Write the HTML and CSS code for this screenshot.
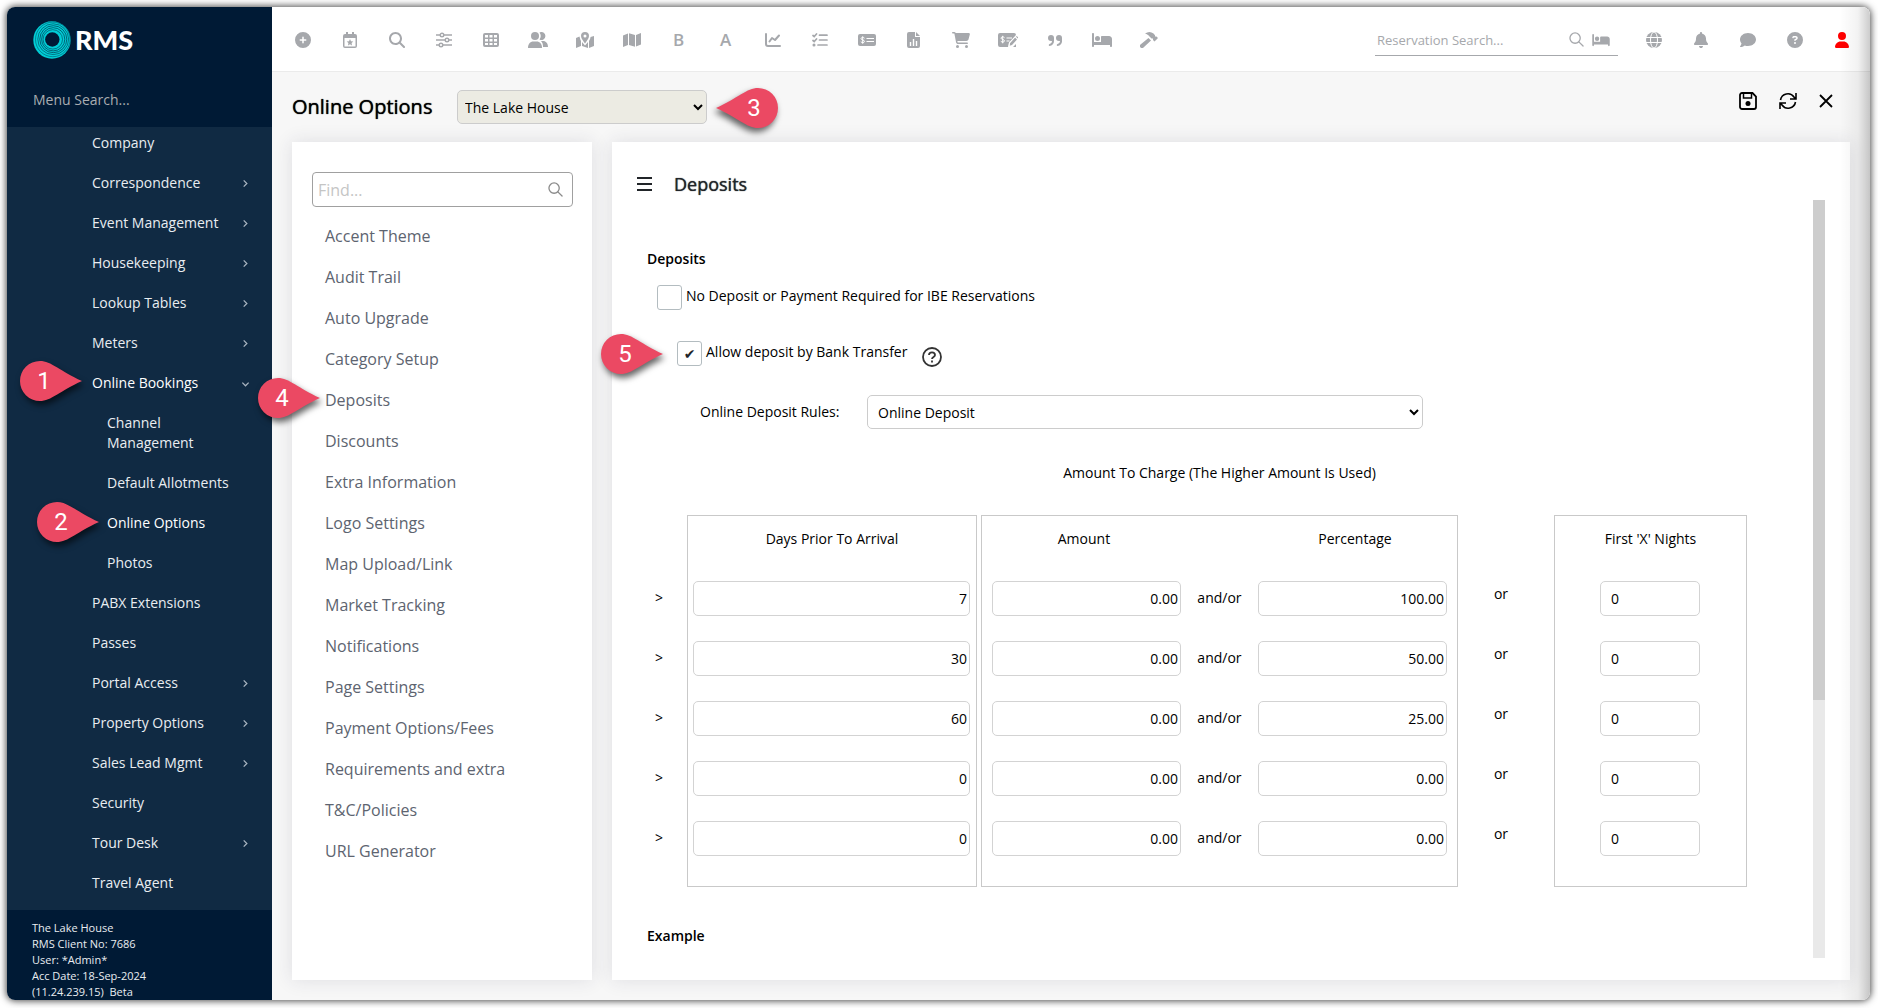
FILE: index.html
```html
<!DOCTYPE html>
<html lang="en">
<head>
<meta charset="utf-8">
<title>RMS - Online Options</title>
<link rel="stylesheet" href="styles.css">
</head>
<body>
<svg class="sprite" aria-hidden="true">
  <symbol id="bed" viewBox="0 0 640 512"><path d="M32 32c17.700 0 32 14.300 32 32V320H288V160c0-17.700 14.300-32 32-32H544c53 0 96 43 96 96V448c0 17.700-14.300 32-32 32s-32-14.300-32-32V416H64v32c0 17.700-14.300 32-32 32s-32-14.300-32-32V64C0 46.300 14.300 32 32 32zm144 96a80 80 0 1 1 0 160 80 80 0 1 1 0-160z"/></symbol>
  <symbol id="right" viewBox="0 0 10 10"><path d="M3 1.500l3.500 3.500L3 8.500" fill="none" stroke="currentColor" stroke-width="1.400"/></symbol>
  <symbol id="down" viewBox="0 0 10 10"><path d="M1.500 4l3.500 3.500L8.500 4" fill="none" stroke="currentColor" stroke-width="1.400"/></symbol>
  <symbol id="find" viewBox="0 0 16 16"><g fill="none" stroke="currentColor" stroke-width="1.400" stroke-linecap="round"><circle cx="6.500" cy="6.500" r="5.500"/><path d="M10.500 10.500l4.500 4.500"/></g></symbol>
  <symbol id="drop" viewBox="0 0 62 40"><path d="M20 0C31 0 40 10 62 20C40 30 31 40 20 40A20 20 0 0 1 20 0z"/></symbol>
</svg>
<div class="window">
  <aside class="sidebar">
    <div class="brand">
      <a class="logo" href="#">
        <svg width="38" height="38" viewBox="0 0 38 38" fill="none" stroke="#001a35" aria-hidden="true">
          <circle cx="19" cy="19" r="18.700" fill="#00ced6" stroke="none"/>
          <circle cx="19.800" cy="18.400" r="17.300" stroke-width=".4"/>
          <circle cx="20.200" cy="18.200" r="15.400" stroke-width=".5"/>
          <circle cx="20.300" cy="18.200" r="13.500" stroke-width=".6"/>
          <circle cx="20.200" cy="18.300" r="11.600" stroke-width=".6"/>
          <circle cx="19.800" cy="18.400" r="9.700" stroke-width=".5"/>
          <circle cx="19.300" cy="18.500" r="7.200" fill="#001a35" stroke="none"/>
        </svg>
        <span>RMS</span>
      </a>
      <input class="menu-search" type="text" placeholder="Menu Search..." aria-label="Menu search">
    </div>
    <nav class="menu" aria-label="Main menu">
      <ul>
        <li><a href="#">Company</a></li>
        <li><a href="#">Correspondence<svg class="chev"><use href="#right"/></svg></a></li>
        <li><a href="#">Event Management<svg class="chev"><use href="#right"/></svg></a></li>
        <li><a href="#">Housekeeping<svg class="chev"><use href="#right"/></svg></a></li>
        <li><a href="#">Lookup Tables<svg class="chev"><use href="#right"/></svg></a></li>
        <li><a href="#">Meters<svg class="chev"><use href="#right"/></svg></a></li>
        <li class="current"><a href="#">Online Bookings<svg class="chev"><use href="#down"/></svg></a>
          <ul class="submenu">
            <li><a href="#">Channel<br>Management</a></li>
            <li><a href="#">Default Allotments</a></li>
            <li class="current"><a href="#">Online Options</a></li>
            <li><a href="#">Photos</a></li>
          </ul>
        </li>
        <li><a href="#">PABX Extensions</a></li>
        <li><a href="#">Passes</a></li>
        <li><a href="#">Portal Access<svg class="chev"><use href="#right"/></svg></a></li>
        <li><a href="#">Property Options<svg class="chev"><use href="#right"/></svg></a></li>
        <li><a href="#">Sales Lead Mgmt<svg class="chev"><use href="#right"/></svg></a></li>
        <li><a href="#">Security</a></li>
        <li><a href="#">Tour Desk<svg class="chev"><use href="#right"/></svg></a></li>
        <li><a href="#">Travel Agent</a></li>
      </ul>
    </nav>
    <footer class="client">
      <div>The Lake House</div>
      <div>RMS Client No: 7686</div>
      <div>User: *Admin*</div>
      <div>Acc Date: 18-Sep-2024</div>
      <div>(11.24.239.15)&nbsp; Beta</div>
    </footer>
  </aside>

  <main class="main">
    <header class="topbar">
      <div class="tools">
        <button aria-label="Add"><svg width="16" height="16" viewBox="0 0 512 512"><path fill-rule="evenodd" d="M256 512A256 256 0 1 0 256 0a256 256 0 1 0 0 512zM232 344V280H168c-13 0-24-11-24-24s11-24 24-24h64V168c0-13 11-24 24-24s24 11 24 24v64h64c13 0 24 11 24 24s-11 24-24 24H280v64c0 13-11 24-24 24s-24-11-24-24z"/></svg></button>
        <button aria-label="Events"><svg width="14" height="16" viewBox="0 0 14 16"><path fill-rule="evenodd" d="M3 0h2v2h4V0h2v2h1a2 2 0 0 1 2 2v10a2 2 0 0 1-2 2H2a2 2 0 0 1-2-2V4a2 2 0 0 1 2-2h1zM1.500 6v8.500h11V6z"/><path d="M7 7l1 2.200 2.300.3-1.700 1.600.4 2.300L7 12.300l-2 1.100.4-2.300-1.700-1.600L6 9.200z"/></svg></button>
        <button aria-label="Search"><svg width="16" height="16" viewBox="0 0 512 512"><path fill-rule="evenodd" d="M416 208c0 46-15 88-40 123L503 457c12 13 12 33 0 46s-33 12-46 0L331 376c-35 25-77 40-123 40C93 416 0 323 0 208S93 0 208 0S416 93 416 208zM208 352a144 144 0 1 0 0-288 144 144 0 1 0 0 288z"/></svg></button>
        <button aria-label="Filters"><svg width="16" height="16" viewBox="0 0 16 16" fill="none" stroke="currentColor" stroke-width="1.400"><path d="M0 3h4.500M8 3h8M0 8h9M13 8h3M0 13h3.500M7 13h9"/><circle cx="6" cy="3" r="1.800"/><circle cx="11" cy="8" r="1.800"/><circle cx="5" cy="13" r="1.800"/></svg></button>
        <button aria-label="Grid"><svg width="16" height="14" viewBox="0 0 16 14"><path fill-rule="evenodd" d="M2 0h12a2 2 0 0 1 2 2v10a2 2 0 0 1-2 2H2a2 2 0 0 1-2-2V2a2 2 0 0 1 2-2zM2 2v2.500h3V2zM6.500 2v2.500h3V2zM11 2v2.500h3V2zM2 6v2.500h3V6zM6.500 6v2.500h3V6zM11 6v2.500h3V6zM2 10v2h3v-2zM6.500 10v2h3v-2zM11 10v2h3v-2z"/></svg></button>
        <button aria-label="Guests"><svg width="20" height="16" viewBox="0 0 20 16"><circle cx="7" cy="4" r="4"/><path d="M0 16c0-4 2-6.500 5.500-6.500h3C12 9.500 14 12 14 16z"/><path d="M11.500.5a4 4 0 1 1 0 7A6 6 0 0 0 11.500.5zM13 9h2c3 0 5 2.500 5 6h-5c0-3-.5-4.500-2-6z"/></svg></button>
        <button aria-label="Map location"><svg width="18" height="16" viewBox="0 0 18 16"><path d="M0 6l3.500-1.500c.5 2.500 1 3.500 1.500 4.500v5L0 16zM18 4v10l-5 2V9c1-2 1.500-3 1.500-4zM6 10l3 3.500 3-3.500v6l-6-2z"/><path fill-rule="evenodd" d="M9 0a4 4 0 0 1 4 4c0 2.500-2.500 5-4 7.500C7.500 9 5 6.500 5 4a4 4 0 0 1 4-4zM9 2.500a1.500 1.500 0 1 0 0 3 1.500 1.500 0 1 0 0-3z"/></svg></button>
        <button aria-label="Map"><svg width="18" height="14" viewBox="0 0 18 14"><path d="M0 2.500L5 .5v11.500l-5 2zM6 .3l6 1.700v11.700l-6-1.700zM13 2l5-2v11.500l-5 2z"/></svg></button>
        <button class="letter">B</button>
        <button class="letter">A</button>
        <button aria-label="Charts"><svg width="16" height="14" viewBox="0 0 16 14" fill="none" stroke="currentColor" stroke-width="2" stroke-linecap="round" stroke-linejoin="round"><path d="M1 1v10a2 2 0 0 0 2 2h12M4.500 8.500L7 5l3 2 4-4.500"/></svg></button>
        <button aria-label="Tasks"><svg width="16" height="14" viewBox="0 0 16 14" fill="none" stroke="currentColor" stroke-width="1.700" stroke-linecap="round"><path d="M1 2.500L2.200 3.500 4.500 1M1 7.500L2.200 8.500 4.500 6M7.500 2.200H15M7.500 7H15M6 12H15"/><circle cx="2" cy="12" r=".7"/></svg></button>
        <button aria-label="Payments"><svg width="18" height="12" viewBox="0 0 18 12"><rect width="18" height="12" rx="2"/><g fill="none" stroke="#fff" stroke-width="1"><path d="M8.500 4.500H16M8.500 7.500H16" stroke-width="1.200"/><path d="M6.500 4.200C5.500 3 3 3.200 3 4.700S6.500 5.800 6.500 7.300 4 9 2.800 7.800M4.700 2.300v7.500"/></g></svg></button>
        <button aria-label="Reports"><svg width="13" height="16" viewBox="0 0 13 16"><path d="M2 0h6v5h5v9a2 2 0 0 1-2 2H2a2 2 0 0 1-2-2V2a2 2 0 0 1 2-2zM9 0l4 4H9z"/><path d="M3.500 10v4M6.500 7v7M9.500 9v5" stroke="#fff" stroke-width="1.400"/></svg></button>
        <button aria-label="Sales"><svg width="18" height="16" viewBox="0 0 576 512"><path d="M0 24C0 11 11 0 24 0H70c22 0 41 13 50 32h411c26 0 46 25 39 50l-41 153c-9 31-37 53-70 53H171l5 28c2 12 12 20 24 20H488c13 0 24 11 24 24s-11 24-24 24H200c-35 0-65-25-71-58L77 54c0-3-3-6-7-6H24C11 48 0 37 0 24zM128 464a48 48 0 1 1 96 0 48 48 0 1 1-96 0zm336-48a48 48 0 1 1 0 96 48 48 0 1 1 0-96z"/></svg></button>
        <button aria-label="Cheques"><svg width="20" height="14" viewBox="0 0 20 14"><path d="M2 0h14a2 2 0 0 1 2 2L11 9.500 10 14H2a2 2 0 0 1-2-2V2a2 2 0 0 1 2-2z"/><path d="M12 10l5-5.500 2 2L14 12l-2.500.8zM18 3.700l.8-.7 1.500 1.500-.7.900zM15 14l3-3v3z"/><g fill="none" stroke="#fff"><path d="M8.500 5H14M8.500 8H11.500" stroke-width="1.200"/><path d="M6.500 4.700C5.500 3.500 3 3.700 3 5.200S6.500 6.300 6.500 7.800 4 9.500 2.800 8.300M4.700 2.800v7.500"/><path d="M11 13.500l.5-3.500 6-6.500" stroke-width=".8"/></g></svg></button>
        <button aria-label="Quotes"><svg width="14" height="11" viewBox="0 0 14 11"><path d="M3 0a3 3 0 0 1 3 3v2.500A5 5 0 0 1 1.500 11c-1 0-1-1.800 0-2C3 8.500 4 7.500 4 6H3a3 3 0 0 1 0-6z"/><path d="M11 0a3 3 0 0 1 3 3v2.500A5 5 0 0 1 9.500 11c-1 0-1-1.800 0-2C11 8.500 12 7.500 12 6h-1a3 3 0 0 1 0-6z"/></svg></button>
        <button aria-label="Rooms"><svg width="20" height="16"><use href="#bed"/></svg></button>
        <button aria-label="Maintenance"><svg width="18" height="16" viewBox="0 0 18 16"><path d="M5 1.500C8-.5 11-.5 13.500 1.500l1.500 1.800v1.200h1.500L18 6l-3.500 3.500L13 8V6.500h-1.500L9.500 4.500C8.500 3 7 2 5 1.500zM8.500 6L11 8.500 3.500 15.500a1.800 1.800 0 0 1-3-3z"/></svg></button>
      </div>
      <div class="account">
        <div class="booking-search">
          <input type="text" placeholder="Reservation Search..." aria-label="Reservation search">
          <svg width="15" height="15"><use href="#find"/></svg>
          <svg width="18" height="14"><use href="#bed"/></svg>
        </div>
        <button aria-label="Language"><svg width="16" height="16" viewBox="0 0 16 16"><circle cx="8" cy="8" r="8"/><g fill="none" stroke="#fff" stroke-width="1"><ellipse cx="8" cy="8" rx="3.500" ry="8"/><path d="M0 5.500h16M0 10.500h16"/></g></svg></button>
        <button aria-label="Alerts"><svg width="14" height="16" viewBox="0 0 448 512"><path d="M224 0c-18 0-32 14-32 32V51C119 66 64 131 64 208v19c0 47-17 92-48 127l-8 9c-8 9-10 23-5 34S19 416 32 416H416c13 0 24-7 29-19s3-25-5-34l-8-9C401 319 384 274 384 227V208c0-77-55-142-128-157V32c0-18-14-32-32-32zm45 493c12-12 19-28 19-45H160c0 17 7 33 19 45s28 19 45 19s33-7 45-19z"/></svg></button>
        <button aria-label="Messages"><svg width="16" height="16" viewBox="0 0 512 512"><path d="M512 240c0 115-115 208-256 208c-37 0-72-6-104-18c-12 9-31 21-54 31C74 471 45 480 16 480c-6 0-12-4-15-10c-2-6-1-13 4-17c8-8 14-17 21-29c10-16 20-38 21-62C18 327 0 285 0 240C0 125 115 32 256 32s256 93 256 208z"/></svg></button>
        <button aria-label="Help"><svg width="16" height="16" viewBox="0 0 512 512"><path fill-rule="evenodd" d="M256 512A256 256 0 1 0 256 0a256 256 0 1 0 0 512zM170 165c8-22 29-37 53-37h58c35 0 63 28 63 63c0 23-12 44-32 55L280 264c0 13-11 24-24 24c-13 0-24-11-24-24V250c0-8 5-16 12-20l44-26c5-2 8-7 8-13c0-8-7-15-15-15H223c-4 0-7 2-8 5c-4 14-18 21-31 16s-19-18-14-32zM224 352a32 32 0 1 1 64 0 32 32 0 1 1-64 0z"/></svg></button>
        <button class="profile" aria-label="Profile"><svg width="14" height="16" viewBox="0 0 448 512"><path d="M224 256A128 128 0 1 0 224 0a128 128 0 1 0 0 256zm-46 48C80 304 0 384 0 482C0 499 13 512 30 512H418c17 0 30-13 30-30C448 384 368 304 270 304H178z"/></svg></button>
      </div>
    </header>

    <div class="page-head">
      <h1>Online Options</h1>
      <div class="property">
        <select aria-label="Property"><option>The Lake House</option></select>
        <div class="pin pin-flip pin-3"><svg><use href="#drop"/></svg><span>3</span></div>
      </div>
      <div class="actions">
        <button aria-label="Save"><svg width="18" height="18" viewBox="0 0 18 18" fill="none" stroke="currentColor" stroke-width="1.800"><path d="M1 3a2 2 0 0 1 2-2h10.500L17 4.500V15a2 2 0 0 1-2 2H3a2 2 0 0 1-2-2z"/><path d="M4.500 1v5h8V1" stroke-width="1.500"/><circle cx="9" cy="11.500" r="2.500" fill="currentColor" stroke="none"/></svg></button>
        <button aria-label="Refresh"><svg width="18" height="18" viewBox="0 0 18 18" fill="none" stroke="currentColor" stroke-width="1.600"><path d="M1.500 8A7.500 7.500 0 0 1 15 5l1.500 2M17 1v6h-6M16.500 10A7.500 7.500 0 0 1 3 13l-1.500-2M1 17v-6h6"/></svg></button>
        <button aria-label="Close"><svg width="14" height="14" viewBox="0 0 14 14" fill="none" stroke="currentColor" stroke-width="1.800"><path d="M1 1l12 12M13 1L1 13"/></svg></button>
      </div>
    </div>

    <div class="panels">
      <section class="panel options">
        <div class="find">
          <input type="text" placeholder="Find..." aria-label="Find option">
          <svg width="15" height="15"><use href="#find"/></svg>
        </div>
        <ul class="option-list">
          <li><a href="#">Accent Theme</a></li>
          <li><a href="#">Audit Trail</a></li>
          <li><a href="#">Auto Upgrade</a></li>
          <li><a href="#">Category Setup</a></li>
          <li><a href="#">Deposits</a></li>
          <li><a href="#">Discounts</a></li>
          <li><a href="#">Extra Information</a></li>
          <li><a href="#">Logo Settings</a></li>
          <li><a href="#">Map Upload/Link</a></li>
          <li><a href="#">Market Tracking</a></li>
          <li><a href="#">Notifications</a></li>
          <li><a href="#">Page Settings</a></li>
          <li><a href="#">Payment Options/Fees</a></li>
          <li><a href="#">Requirements and extra</a></li>
          <li><a href="#">T&amp;C/Policies</a></li>
          <li><a href="#">URL Generator</a></li>
        </ul>
      </section>

      <section class="panel detail">
        <header class="detail-head">
          <button aria-label="Toggle list"><svg width="15" height="14" viewBox="0 0 15 14"><path d="M0 1h15M0 7h15M0 13h15" stroke="currentColor" stroke-width="2"/></svg></button>
          <h2>Deposits</h2>
        </header>
        <div class="scroll-area">
          <form class="form">
            <h3>Deposits</h3>
            <div class="check">
              <input type="checkbox" id="no-deposit"><label for="no-deposit">No Deposit or Payment Required for IBE Reservations</label>
            </div>
            <div class="check nested">
              <input type="checkbox" id="bank" checked><label for="bank">Allow deposit by Bank Transfer</label>
              <button type="button" class="hint" aria-label="About bank transfer"><svg width="20" height="20" viewBox="0 0 20 20" fill="none" stroke="currentColor" stroke-width="1.800"><circle cx="10" cy="10" r="9"/><path d="M7 8c0-3.500 6-3.500 6 0 0 2-3 1.800-3 4M10 13.500v2"/></svg></button>
            </div>
            <div class="rules">
              <label for="rules">Online Deposit Rules:</label>
              <select id="rules"><option>Online Deposit</option></select>
            </div>
            <table class="charges">
              <colgroup><col class="c-mark"><col><col class="c-gap"><col class="c-money"><col class="c-join"><col class="c-money"><col class="c-or"><col class="c-nights"></colgroup>
              <thead>
                <tr class="group"><td colspan="3"></td><th colspan="3">Amount To Charge (The Higher Amount Is Used)</th><td colspan="2"></td></tr>
                <tr class="heads"><td></td><th class="l r">Days Prior To Arrival</th><td></td><th class="l">Amount</th><td class="mid"></td><th class="r">Percentage</th><td></td><th class="l r">First 'X' Nights</th></tr>
              </thead>
              <tbody>
                <tr><td class="mark">&gt;</td><td class="days l r"><input type="text" value="7" aria-label="Days prior, row 1"></td><td></td><td class="amount l"><input type="text" value="0.00" aria-label="Amount, row 1"></td><td>and/or</td><td class="percent r"><input type="text" value="100.00" aria-label="Percentage, row 1"></td><td class="or">or</td><td class="nights l r"><input type="text" value="0" aria-label="Nights, row 1"></td></tr>
                <tr><td class="mark">&gt;</td><td class="days l r"><input type="text" value="30" aria-label="Days prior, row 2"></td><td></td><td class="amount l"><input type="text" value="0.00" aria-label="Amount, row 2"></td><td>and/or</td><td class="percent r"><input type="text" value="50.00" aria-label="Percentage, row 2"></td><td class="or">or</td><td class="nights l r"><input type="text" value="0" aria-label="Nights, row 2"></td></tr>
                <tr><td class="mark">&gt;</td><td class="days l r"><input type="text" value="60" aria-label="Days prior, row 3"></td><td></td><td class="amount l"><input type="text" value="0.00" aria-label="Amount, row 3"></td><td>and/or</td><td class="percent r"><input type="text" value="25.00" aria-label="Percentage, row 3"></td><td class="or">or</td><td class="nights l r"><input type="text" value="0" aria-label="Nights, row 3"></td></tr>
                <tr><td class="mark">&gt;</td><td class="days l r"><input type="text" value="0" aria-label="Days prior, row 4"></td><td></td><td class="amount l"><input type="text" value="0.00" aria-label="Amount, row 4"></td><td>and/or</td><td class="percent r"><input type="text" value="0.00" aria-label="Percentage, row 4"></td><td class="or">or</td><td class="nights l r"><input type="text" value="0" aria-label="Nights, row 4"></td></tr>
                <tr><td class="mark">&gt;</td><td class="days l r"><input type="text" value="0" aria-label="Days prior, row 5"></td><td></td><td class="amount l"><input type="text" value="0.00" aria-label="Amount, row 5"></td><td>and/or</td><td class="percent r"><input type="text" value="0.00" aria-label="Percentage, row 5"></td><td class="or">or</td><td class="nights l r"><input type="text" value="0" aria-label="Nights, row 5"></td></tr>
                <tr class="foot"><td></td><td class="l r b"></td><td></td><td class="l b"></td><td class="b"></td><td class="r b"></td><td></td><td class="l r b"></td></tr>
              </tbody>
            </table>
            <h3 class="example">Example</h3>
          </form>
          <div class="track"><div class="thumb"></div></div>
        </div>
      </section>
    </div>
  </main>
  <div class="edge"></div>
</div>
<div class="pin pin-1"><svg><use href="#drop"/></svg><span>1</span></div>
<div class="pin pin-2"><svg><use href="#drop"/></svg><span>2</span></div>
<div class="pin pin-4"><svg><use href="#drop"/></svg><span>4</span></div>
<div class="pin pin-5"><svg><use href="#drop"/></svg><span>5</span></div>
</body>
</html>
```
FILE: styles.css
```css
* { box-sizing: border-box; }
body {
  margin: 0;
  height: 100vh;
  padding: 7px 8px 8px 7px;
  background: #fff;
  color: #000;
  fill: currentColor;
  font: 14px/20px "Open Sans", "Noto Sans", sans-serif;
  overflow: hidden;
}
h1, h2, h3, ul { margin: 0; padding: 0; font-weight: 600; }
ul { list-style: none; font-weight: 400; }
a { color: inherit; text-decoration: none; }
button { padding: 0; border: 0; background: none; color: inherit; display: flex; align-items: center; justify-content: center; }
input, select { font: inherit; color: inherit; }
svg { flex: none; display: block; }
.sprite { position: absolute; width: 0; height: 0; }

.window {
  position: relative;
  display: flex;
  height: 100%;
  border-radius: 8px;
  overflow: hidden;
  box-shadow: 0 0 7px 1px rgba(0, 0, 0, .7);
}
/* soft shade along the right edge of the window */
.edge {
  position: absolute;
  inset: 0 0 0 auto;
  width: 30px;
  background: linear-gradient(to right, rgba(0, 0, 0, 0), rgba(0, 0, 0, .05) 60%, rgba(0, 0, 0, .2));
  pointer-events: none;
}

/* sidebar */
.sidebar { flex: none; width: 265px; display: flex; flex-direction: column; background: #001a35; color: #e9edf1; }
.brand { flex: none; height: 120px; padding: 14px 25px 0 26px; }
.logo { display: flex; align-items: center; gap: 4px; height: 38px; color: #fff; font: 900 27px/38px Lato, sans-serif; }
.menu-search { width: 100%; height: 30px; margin-top: 25px; padding: 0; border: 0; background: none; outline: 0; }
.menu-search::placeholder { color: #a9adb1; opacity: 1; }
.menu { flex: 1; min-height: 0; overflow: hidden; background: #102a43; }
.menu a { display: flex; justify-content: space-between; align-items: center; padding: 6px 22px 14px 85px; }
.submenu a { padding-left: 100px; }
.menu .current > a { color: #fff; }
.chev { width: 9px; height: 9px; color: #a9b4c0; }
.client { flex: none; height: 90px; padding: 10px 25px 0; font-size: 11px; line-height: 16px; overflow: hidden; }

/* top bar */
.main { flex: 1; min-width: 0; display: flex; flex-direction: column; background: #f7f7f7; }
.topbar { flex: none; height: 65px; display: flex; justify-content: space-between; align-items: center; padding: 2px 5px 0 7px; background: #fff; border-bottom: 1px solid #ebebeb; color: #a6a8ac; }
.tools, .account { display: flex; align-items: center; }
.tools button, .account button { width: 47px; height: 40px; }
.tools .letter { font: 600 17px/20px "Open Sans", sans-serif; }
.booking-search { display: flex; align-items: center; gap: 8px; width: 243px; height: 32px; margin: 0 12px 0 0; padding: 0 8px 0 2px; border-bottom: 1px solid #a6a8ac; }
.booking-search input { flex: 1; min-width: 0; padding: 0; border: 0; outline: 0; background: none; font-size: 13px; }
.booking-search input::placeholder { color: #a6a8ac; opacity: 1; }
.account .profile { color: #f00; }

/* page heading */
.page-head { flex: none; height: 70px; display: flex; align-items: center; padding: 0 37px 0 20px; }
.page-head h1 { font-size: 20px; line-height: 28px; width: 165px; font-weight: 500; text-shadow: 0 0 1px currentColor; }
.property { position: relative; }
.property select { width: 250px; height: 34px; padding: 0 4px 0 3px; border: 1px solid #ccc; border-radius: 5px; background: #ecebe3; }
.actions { display: flex; gap: 22px; margin: 0 0 12px auto; }

/* panels */
.panels { flex: 1; min-height: 0; display: flex; gap: 20px; padding: 0 20px 20px; }
.panel { background: #fff; box-shadow: 0 0 18px rgba(40, 40, 70, .12); }
.options { flex: none; width: 300px; padding: 30px 19px 0 20px; }
.find { display: flex; align-items: center; height: 35px; padding: 0 9px 0 5px; border: 1px solid #a0a0a0; border-radius: 4px; color: #8b8b8b; font-size: 16px; }
.find input { flex: 1; min-width: 0; padding: 0; border: 0; outline: 0; background: none; }
.find input::placeholder { color: #c5c5c5; opacity: 1; }
.option-list { margin-top: 9px; font-size: 16px; line-height: 41px; color: #5d6470; }
.option-list a { display: block; padding-left: 13px; }

.detail { flex: 1; min-width: 0; display: flex; flex-direction: column; padding: 30px 25px 22px; }
.detail-head { display: flex; align-items: center; gap: 22px; height: 24px; margin-bottom: 4px; color: #212529; }
.detail-head h2 { font-size: 18px; line-height: 24px; font-weight: 500; text-shadow: 0 0 1px currentColor; }
.scroll-area { flex: 1; min-height: 0; display: flex; }
.form { flex: 1; min-width: 0; overflow: hidden; padding: 49px 66px 0 10px; }
.form h3 { font-size: 14px; line-height: 20px; }
.track { flex: none; width: 12px; background: #e9e9e9; }
.thumb { height: 66%; background: #cdcdcd; }

.check { display: flex; gap: 4px; margin: 16px 0 0 10px; line-height: 22px; }
.check.nested { margin: 31px 0 0 30px; }
.check input { appearance: none; width: 25px; height: 25px; margin: 0; border: 1px solid #b3bcc0; border-radius: 3px; background: #fff; display: grid; place-items: center; }
.check input:checked::before { content: "✔"; font: 14px/14px "DejaVu Sans", sans-serif; color: #212529; }
.hint { width: 20px; height: 20px; margin: 6px 0 0 11px; color: #333; }
.rules { display: flex; align-items: center; margin: 28px 0 0 53px; }
.rules label { flex: none; width: 167px; }
.rules select { width: 556px; height: 34px; padding: 0 6px; border: 1px solid #ccc; border-radius: 5px; background: #fff; }

.charges { width: 100%; margin-top: 34px; border-collapse: separate; border-spacing: 0; table-layout: fixed; text-align: center; }
.charges th, .charges td { padding: 0; font-weight: 400; }
.c-mark { width: 40px; }
.c-gap { width: 4px; }
.c-money { width: 205px; }
.c-join { width: 67px; }
.c-or { width: 96px; }
.c-nights { width: 193px; }
.group { height: 52px; vertical-align: top; }
.heads { height: 53px; }
.charges .heads th, .heads .mid { border-top: 1px solid #c9c9c9; padding-bottom: 6px; }
.charges .l { border-left: 1px solid #c9c9c9; }
.charges .r { border-right: 1px solid #c9c9c9; }
.charges .b { border-bottom: 1px solid #c9c9c9; }
.charges tbody tr { height: 60px; }
.charges tbody .foot { height: 19px; }
.charges input { display: block; width: 100%; height: 35px; padding: 0 2px; border: 1px solid #d3d3d3; border-radius: 5px; background: #fff; text-align: right; }
.charges .mark { text-align: left; padding-left: 8px; }
.charges .days { padding: 0 6px 0 5px; }
.charges .amount { padding: 0 5px 0 10px; }
.charges .percent { padding: 0 10px 0 5px; }
.charges .or { padding: 0 10px 8px 0; }
.charges .nights input { width: 100px; margin: 0 auto 0 45px; padding-left: 10px; text-align: left; }
.example { margin-top: 39px; }

/* numbered markers laid over the page */
.pin { position: absolute; width: 62px; height: 40px; color: #eb4963; }
.pin svg { width: 62px; height: 40px; overflow: visible; filter: drop-shadow(2px 4px 3px rgba(0, 0, 0, .6)); }
.pin span { position: absolute; inset: 0 auto 0 0; width: 48px; text-align: center; color: #fff; font: 24px/40px Roboto, sans-serif; }
.pin-flip svg { transform: scaleX(-1); }
.pin-flip span { inset: 0 0 0 auto; }
.pin-1 { left: 20px; top: 361px; }
.pin-2 { left: 37px; top: 502px; }
.pin-3 { left: 259px; top: -2px; }
.pin-4 { left: 258px; top: 378px; }
.pin-5 { left: 601px; top: 334px; }
```
